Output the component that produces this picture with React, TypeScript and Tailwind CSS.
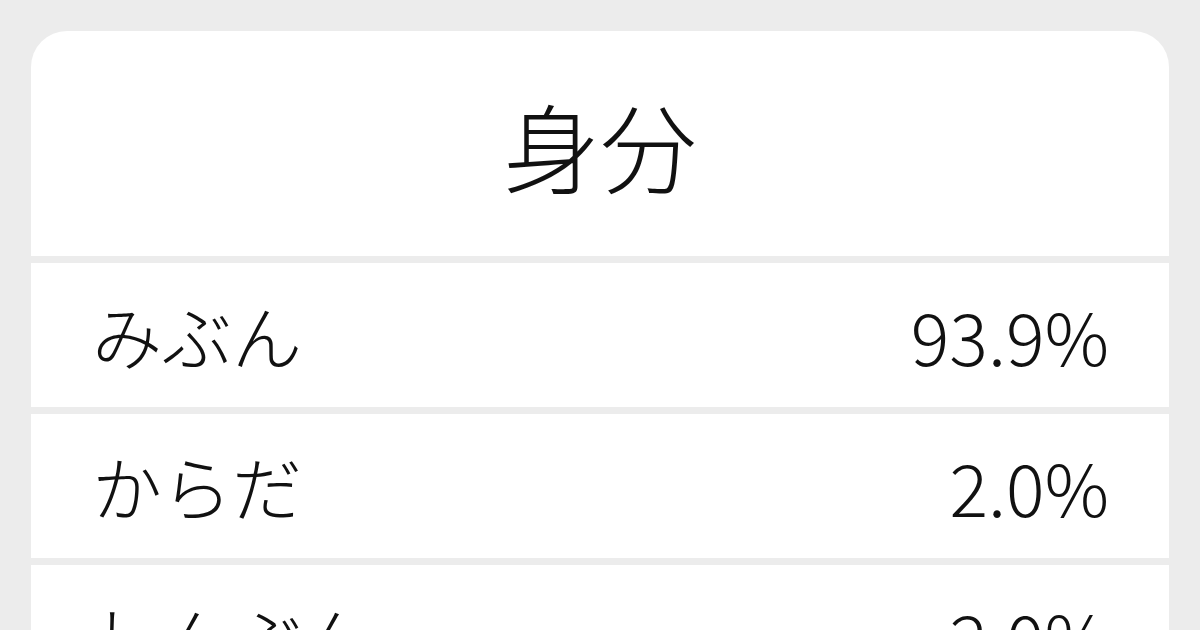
const rows = [
  { reading: "みぶん", pct: "93.9%" },
  { reading: "からだ", pct: "2.0%" },
  { reading: "しんぶん", pct: "2.0%" },
];

export default function App() {
  return (
    <div
      className="h-[630px] w-[1200px] overflow-hidden bg-[#ececec] px-[31px] pt-[31px] text-[#111111]"
      style={{ fontFamily: '"Noto Sans CJK JP", "Noto Sans", sans-serif' }}
    >
      <div className="flex flex-col gap-[7px] overflow-hidden rounded-t-[36px]">
        <div className="flex h-[225px] items-center justify-center bg-white">
          <h1 className="text-[97px] font-light leading-none">身分</h1>
        </div>
        {rows.map((row) => (
          <div
            key={row.reading}
            className="flex h-[144px] shrink-0 items-center justify-between bg-white pl-[61px] pr-[60px]"
          >
            <span className="text-[70px] font-light leading-none">{row.reading}</span>
            <span className="text-[72px] font-light leading-none">{row.pct}</span>
          </div>
        ))}
      </div>
    </div>
  );
}
